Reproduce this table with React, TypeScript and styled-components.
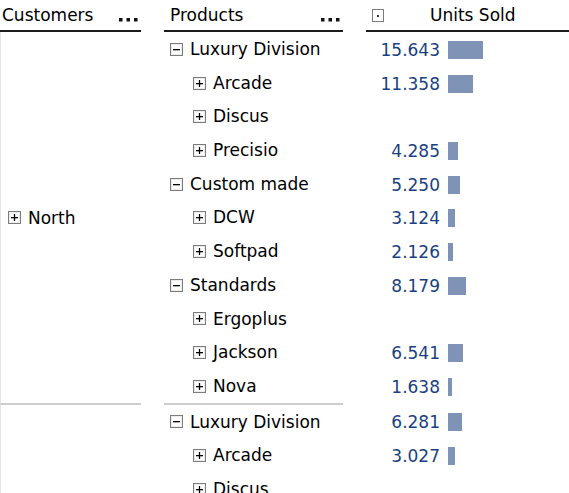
import React from 'react';
import styled, {createGlobalStyle} from 'styled-components';

const GlobalStyle = createGlobalStyle`
  html, body {
    margin: 0;
    padding: 0;
    background: #fff;
    overflow: hidden;
  }
  body {
    font-family: "DejaVu Sans", "Liberation Sans", sans-serif;
    font-size: 17px;
    color: #000;
  }
`;

const ROW_H = 33.7;
const MAX_UNITS = 15643;
const MAX_BAR = 35;

interface ProductRow {
  name: string;
  level: 0 | 1;
  units?: number;
}

interface CustomerGroup {
  id: string;
  customer?: string;
  rows: ProductRow[];
}

// the second customer group only shows its first rows before the view ends
const groups: CustomerGroup[] = [
  {
    id: 'north',
    customer: 'North',
    rows: [
      {name: 'Luxury Division', level: 0, units: 15643},
      {name: 'Arcade', level: 1, units: 11358},
      {name: 'Discus', level: 1},
      {name: 'Precisio', level: 1, units: 4285},
      {name: 'Custom made', level: 0, units: 5250},
      {name: 'DCW', level: 1, units: 3124},
      {name: 'Softpad', level: 1, units: 2126},
      {name: 'Standards', level: 0, units: 8179},
      {name: 'Ergoplus', level: 1},
      {name: 'Jackson', level: 1, units: 6541},
      {name: 'Nova', level: 1, units: 1638},
    ],
  },
  {
    id: 'next',
    rows: [
      {name: 'Luxury Division', level: 0, units: 6281},
      {name: 'Arcade', level: 1, units: 3027},
      {name: 'Discus', level: 1},
    ],
  },
];

const Table = styled.div`
  display: grid;
  grid-template-columns: 141px 179px 1fr;
  column-gap: 23px;
  height: 493px;
  overflow: hidden;
  align-content: start;
`;

const HeaderCell = styled.div<{$pad: number}>`
  height: 30px;
  line-height: 30px;
  border-bottom: 2px solid #1c1c1c;
  display: flex;
  align-items: center;
  padding-left: ${p => p.$pad}px;
  padding-right: 3px;
  white-space: nowrap;
`;

const HeaderTitle = styled.span<{$offset?: number}>`
  flex: ${p => (p.$offset ? '0 0 auto' : '1')};
  margin-left: ${p => p.$offset || 0}px;
`;

const Dots = styled.svg`
  margin-top: 9px;
  flex: none;
`;

const Group = styled.div`
  grid-column: 1 / -1;
  display: grid;
  grid-template-columns: 141px 179px 1fr;
  column-gap: 23px;
`;

const CustomerCell = styled.div`
  border-left: 1px solid #e4e4e4;
  border-bottom: 2px solid #cdcdcd;
  display: flex;
  align-items: center;
  gap: 7px;
  padding-left: 7px;
`;

const ProductList = styled.div`
  border-bottom: 2px solid #cdcdcd;
`;

const ValueList = styled.div``;

const Row = styled.div<{$indent: number}>`
  height: ${ROW_H}px;
  line-height: ${ROW_H}px;
  display: flex;
  align-items: center;
  gap: 7px;
  padding-left: ${p => p.$indent}px;
  white-space: nowrap;
`;

const Label = styled.span`
  padding-top: 2px;
`;

const ValueRow = styled.div`
  height: ${ROW_H}px;
  display: flex;
  align-items: center;
  gap: 8px;
`;

const Number = styled.span`
  width: 74px;
  text-align: right;
  color: #1a3f82;
  padding-top: 2px;
`;

const Bar = styled.div`
  height: 18px;
  background: #7f93b6;
  margin-top: 2px;
`;

const ToggleBox = ({open}: {open: boolean}) => (
  <svg width="13" height="13" viewBox="0 0 13 13" style={{flex: 'none', marginTop: 1}}>
    <rect x="0.5" y="0.5" width="12" height="12" fill="#fff" stroke="#7c7c7c" />
    <rect x="1.5" y="1.5" width="10" height="10" fill="none" stroke="#ececec" />
    <rect x="3" y="6" width="7" height="1.3" fill="#000" />
    {!open && <rect x="5.85" y="3" width="1.3" height="7" fill="#000" />}
  </svg>
);

const MeasureBox = () => (
  <svg width="12" height="13" viewBox="0 0 12 13" style={{flex: 'none'}}>
    <rect x="0.5" y="0.5" width="11" height="12" fill="#fff" stroke="#7c7c7c" />
    <rect x="5" y="6" width="2" height="2" fill="#333" />
  </svg>
);

const MoreDots = () => (
  <Dots width="19" height="4" viewBox="0 0 19 4">
    <rect x="0" y="0" width="3.5" height="3.5" fill="#111" />
    <rect x="7.5" y="0" width="3.5" height="3.5" fill="#111" />
    <rect x="15" y="0" width="3.5" height="3.5" fill="#111" />
  </Dots>
);

const formatUnits = (n: number) => {
  const s = String(n);
  return s.length > 3 ? `${s.slice(0, -3)}.${s.slice(-3)}` : s;
};

export default function App() {
  return (
    <>
      <GlobalStyle />
      <Table>
        <HeaderCell $pad={2}>
          <HeaderTitle>Customers</HeaderTitle>
          <MoreDots />
        </HeaderCell>
        <HeaderCell $pad={6}>
          <HeaderTitle>Products</HeaderTitle>
          <MoreDots />
        </HeaderCell>
        <HeaderCell $pad={6}>
          <MeasureBox />
          <HeaderTitle $offset={46}>Units Sold</HeaderTitle>
        </HeaderCell>

        {groups.map(g => (
          <Group key={g.id}>
            <CustomerCell>
              {g.customer && (
                <>
                  <ToggleBox open={false} />
                  <Label>{g.customer}</Label>
                </>
              )}
            </CustomerCell>
            <ProductList>
              {g.rows.map((r, i) => (
                <Row key={i} $indent={r.level === 0 ? 6 : 29}>
                  <ToggleBox open={r.level === 0} />
                  <Label>{r.name}</Label>
                </Row>
              ))}
            </ProductList>
            <ValueList>
              {g.rows.map((r, i) => (
                <ValueRow key={i}>
                  {r.units !== undefined && (
                    <>
                      <Number>{formatUnits(r.units)}</Number>
                      <Bar style={{width: Math.max(2, Math.round((r.units / MAX_UNITS) * MAX_BAR))}} />
                    </>
                  )}
                </ValueRow>
              ))}
            </ValueList>
          </Group>
        ))}
      </Table>
    </>
  );
}
